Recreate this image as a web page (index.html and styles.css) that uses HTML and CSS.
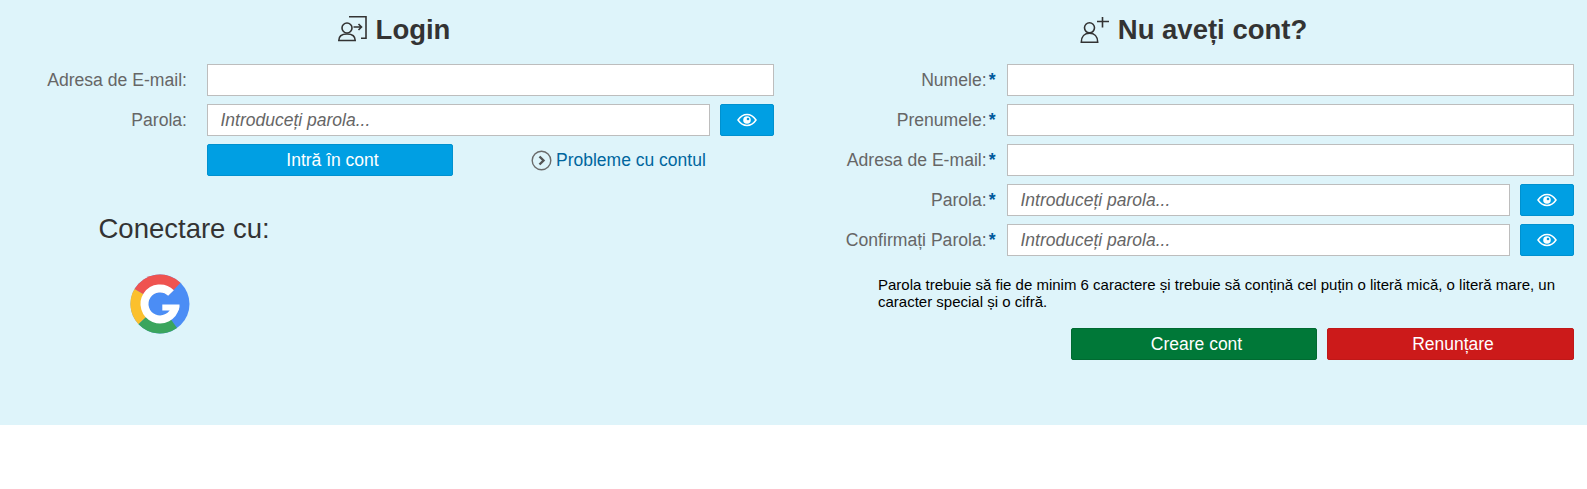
FILE: index.html
```html
<!DOCTYPE html>
<html lang="ro">
<head>
<meta charset="utf-8">
<title>Login</title>
<link rel="stylesheet" href="styles.css">
</head>
<body>
<main class="panel">
  <section class="col col-login">
    <h2 class="title title-login">
      <svg class="title-icon" viewBox="0 0 30 28" width="30" height="28" fill="none" stroke="#333" stroke-width="1.6">
        <path d="M11 .8h17v21.500h-5"/>
        <circle cx="9" cy="12" r="5"/>
        <path d="M.8 24.500c0-4.500 3.500-6.500 8.200-6.500s8.200 2 8.200 6.500z"/>
        <path d="M15.500 11h8M20.500 8l3 3-3 3"/>
      </svg>
      <span>Login</span>
    </h2>
    <div class="row">
      <label class="lbl lbl-login">Adresa de E-mail:</label>
      <input class="field" type="text">
    </div>
    <div class="row">
      <label class="lbl lbl-login">Parola:</label>
      <input class="field" type="text" placeholder="Introduceți parola...">
      <button class="eye" type="button" aria-label="Arată parola">
        <svg viewBox="0 0 20 14" width="20" height="14"><path d="M1 7c2.500-3.700 5.500-5.500 9-5.500s6.500 1.800 9 5.500c-2.500 3.700-5.500 5.500-9 5.500S3.500 10.700 1 7z" fill="none" stroke="#fff" stroke-width="1.500"/><circle cx="10" cy="7" r="3.800" fill="#fff"/><circle cx="11" cy="6" r="1.300" fill="#009fe3"/></svg>
      </button>
    </div>
    <div class="row row-actions">
      <span class="lbl lbl-login"></span>
      <button class="btn btn-blue" type="button">Intră în cont</button>
      <a class="trouble" href="#">
        <svg viewBox="0 0 21 21" width="21" height="21"><circle cx="10.500" cy="10.500" r="9.300" fill="none" stroke="#6b6b6b" stroke-width="1.400"/><path d="M8.500 6.500l4 4-4 4" fill="none" stroke="#555" stroke-width="2.400"/></svg>
        <span>Probleme cu contul</span>
      </a>
    </div>
    <h3 class="connect">Conectare cu:</h3>
    <a class="google" href="#" aria-label="Google">
      <svg viewBox="0 0 60 60" width="60" height="60">
        <circle cx="30" cy="30" r="29.500" fill="#4b8df5"/>
        <path d="M30 30L50.500 8.800A29.500 29.500 0 0 0 4.500 15z" fill="#ef5350"/>
        <path d="M30 30L4.500 15A29.500 29.500 0 0 0 8.500 50.300z" fill="#fbc02d"/>
        <path d="M30 30L8.500 50.300A29.500 29.500 0 0 0 47 54z" fill="#3ba55d"/>
        <circle cx="30" cy="30" r="12" fill="#4b8df5"/>
        <path d="M41 19A15.500 15.500 0 1 0 45.200 33" fill="none" stroke="#fff" stroke-width="8"/>
        <path d="M32.300 30.500H49.500V33A20 20 0 0 1 48.500 36.500H32.300z" fill="#fff"/>
      </svg>
    </a>
  </section>

  <section class="col col-account">
    <h2 class="title title-account">
      <svg class="title-icon" viewBox="0 0 30 28" width="30" height="28" fill="none" stroke="#333" stroke-width="1.600">
        <circle cx="9.500" cy="11.800" r="5"/>
        <path d="M1.300 26.200c0-6 3.500-9 8.200-9s8.200 3 8.200 9z"/>
        <path d="M22.500 1v10.500M17 5.500h12"/>
      </svg>
      <span>Nu aveți cont?</span>
    </h2>
    <div class="row">
      <label class="lbl lbl-acc">Numele:<b>*</b></label>
      <input class="field" type="text">
    </div>
    <div class="row">
      <label class="lbl lbl-acc">Prenumele:<b>*</b></label>
      <input class="field" type="text">
    </div>
    <div class="row">
      <label class="lbl lbl-acc">Adresa de E-mail:<b>*</b></label>
      <input class="field" type="text">
    </div>
    <div class="row">
      <label class="lbl lbl-acc">Parola:<b>*</b></label>
      <input class="field" type="text" placeholder="Introduceți parola...">
      <button class="eye" type="button" aria-label="Arată parola">
        <svg viewBox="0 0 20 14" width="20" height="14"><path d="M1 7c2.500-3.700 5.500-5.500 9-5.500s6.500 1.800 9 5.500c-2.500 3.700-5.500 5.500-9 5.500S3.500 10.700 1 7z" fill="none" stroke="#fff" stroke-width="1.500"/><circle cx="10" cy="7" r="3.800" fill="#fff"/><circle cx="11" cy="6" r="1.300" fill="#009fe3"/></svg>
      </button>
    </div>
    <div class="row">
      <label class="lbl lbl-acc">Confirmați Parola:<b>*</b></label>
      <input class="field" type="text" placeholder="Introduceți parola...">
      <button class="eye" type="button" aria-label="Arată parola">
        <svg viewBox="0 0 20 14" width="20" height="14"><path d="M1 7c2.500-3.700 5.500-5.500 9-5.500s6.500 1.800 9 5.500c-2.500 3.700-5.500 5.500-9 5.500S3.500 10.700 1 7z" fill="none" stroke="#fff" stroke-width="1.500"/><circle cx="10" cy="7" r="3.800" fill="#fff"/><circle cx="11" cy="6" r="1.300" fill="#009fe3"/></svg>
      </button>
    </div>
    <p class="hint">Parola trebuie să fie de minim 6 caractere și trebuie să conțină cel puțin o literă mică, o literă mare, un caracter special și o cifră.</p>
    <div class="actions">
      <button class="btn btn-green" type="button">Creare cont</button>
      <button class="btn btn-red" type="button">Renunțare</button>
    </div>
  </section>
</main>
</body>
</html>
```
FILE: styles.css
```css
* { box-sizing: border-box; }
html, body { margin: 0; padding: 0; }
body {
  height: 489px;
  background: #fff;
  font-family: "Liberation Sans", Arial, sans-serif;
  color: #333;
  overflow: hidden;
}
.panel {
  height: 425px;
  background: #def4fa;
  display: grid;
  grid-template-columns: 794px 1fr;
}
.col { display: flex; flex-direction: column; }
.col-login { padding: 0 20px 0 0; }
.col-account { padding: 0 13px 0 0; }
.title {
  margin: 0;
  height: 64px;
  padding-bottom: 5px;
  display: flex;
  align-items: center;
  justify-content: center;
  gap: 8px;
  font-size: 27.500px;
  font-weight: 700;
  color: #333;
}
.title-login { width: 788px; }
.title-account { padding-left: 19px; }
.title-icon { flex: none; }
.row {
  display: flex;
  align-items: center;
  height: 32px;
  margin-bottom: 8px;
}
.lbl {
  flex: none;
  text-align: right;
  font-size: 17.600px;
  color: #666;
}
.lbl-login { width: 187px; margin-right: 20px; }
.lbl-acc { width: 201.500px; margin-right: 11.500px; white-space: nowrap; }
.lbl-acc b { color: #00599c; margin-left: 2px; font-weight: 700; }
.field {
  flex: 1;
  min-width: 0;
  height: 32px;
  padding: 0 12.500px;
  border: 1px solid #bdbdbd;
  background: #fff;
  font-family: inherit;
  font-size: 17.500px;
  outline: none;
}
.field::placeholder { color: #666; font-style: italic; opacity: 1; }
.eye {
  flex: none;
  width: 54px;
  height: 32px;
  margin-left: 10px;
  padding: 0;
  display: flex;
  align-items: center;
  justify-content: center;
  background: #009fe3;
  border: 1px solid #0091cf;
  border-radius: 2px;
}
.btn {
  height: 32px;
  padding: 0 0 0 5px;
  border-radius: 2px;
  font-family: inherit;
  font-size: 17.500px;
  color: #fff;
}
.btn-blue { width: 246px; flex: none; background: #009fe3; border: 1px solid #0091cf; }
.trouble {
  margin-left: 78px;
  display: flex;
  align-items: center;
  gap: 4px;
  font-size: 17.500px;
  color: #00669e;
  text-decoration: none;
}
.connect {
  margin: 29px 0 0 98.500px;
  font-size: 27.500px;
  line-height: 32px;
  font-weight: 400;
  color: #333;
}
.google {
  display: block;
  width: 60px;
  margin: 29px 0 0 130px;
  line-height: 0;
}
.hint {
  margin: 12px 0 0 84px;
  font-size: 15px;
  line-height: 17px;
  color: #000;
}
.actions {
  display: flex;
  justify-content: flex-end;
  gap: 10px;
  margin-top: 18px;
}
.btn-green { width: 246px; background: #007838; border: 1px solid #006a31; }
.btn-red { width: 247px; background: #cc1a1a; border: 1px solid #c01818; }
```
